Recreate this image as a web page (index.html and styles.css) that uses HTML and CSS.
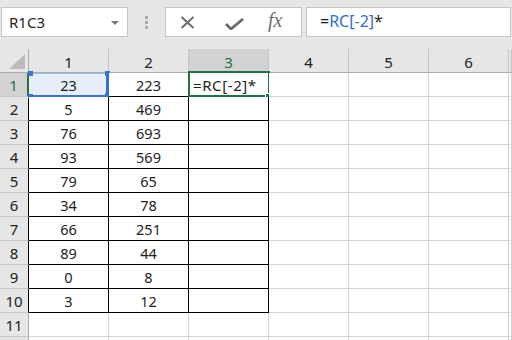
FILE: index.html
```html
<!DOCTYPE html>
<html lang="en">
<head>
    <meta charset="UTF-8">
    <title>Sheet</title>
    <link rel="stylesheet" href="styles.css">
</head>
<body>
<div class="toolbar">
    <div class="namebox">
        <span>R1C3</span>
        <svg class="drop" width="8" height="4" viewBox="0 0 8 4"><path d="M0 0h8L4 4z" fill="#777"/></svg>
    </div>
    <div class="grip"><i></i><i></i><i></i></div>
    <div class="fbuttons">
        <svg class="ico-x" width="15" height="13" viewBox="0 0 15 13"><path d="M1.5 1l12 11M13.5 1l-12 11" stroke="#6b6b6b" stroke-width="2" fill="none"/></svg>
        <svg class="ico-ok" width="19" height="12" viewBox="0 0 19 12"><path d="M1 6l5 5L18 1" stroke="#6b6b6b" stroke-width="2.8" fill="none"/></svg>
        <span class="fx">fx</span>
    </div>
    <div class="formula">=<span class="ref">RC[-2]</span>*</div>
</div>

<div class="sheet">
    <div class="corner"><svg width="16" height="15" viewBox="0 0 16 15"><path d="M16 0v15H0z" fill="#bcbcbc"/></svg></div>
    <div class="ch">1</div>
    <div class="ch">2</div>
    <div class="ch sel">3</div>
    <div class="ch">4</div>
    <div class="ch">5</div>
    <div class="ch">6</div>
    <div class="ch"></div>

    <div class="rh sel">1</div>
    <div class="c tb ref-cell">23<i class="h tl"></i><i class="h tr"></i><i class="h bl"></i><i class="h br"></i></div>
    <div class="c tb">223</div>
    <div class="c tb active left">=RC[-2]*</div>
    <div class="c"></div><div class="c"></div><div class="c"></div><div class="c"></div>

    <div class="rh tbl">2</div>
    <div class="c tb">5</div><div class="c tb">469</div><div class="c tb"></div>
    <div class="c"></div><div class="c"></div><div class="c"></div><div class="c"></div>

    <div class="rh tbl">3</div>
    <div class="c tb">76</div><div class="c tb">693</div><div class="c tb"></div>
    <div class="c"></div><div class="c"></div><div class="c"></div><div class="c"></div>

    <div class="rh tbl">4</div>
    <div class="c tb">93</div><div class="c tb">569</div><div class="c tb"></div>
    <div class="c"></div><div class="c"></div><div class="c"></div><div class="c"></div>

    <div class="rh tbl">5</div>
    <div class="c tb">79</div><div class="c tb">65</div><div class="c tb"></div>
    <div class="c"></div><div class="c"></div><div class="c"></div><div class="c"></div>

    <div class="rh tbl">6</div>
    <div class="c tb">34</div><div class="c tb">78</div><div class="c tb"></div>
    <div class="c"></div><div class="c"></div><div class="c"></div><div class="c"></div>

    <div class="rh tbl">7</div>
    <div class="c tb">66</div><div class="c tb">251</div><div class="c tb"></div>
    <div class="c"></div><div class="c"></div><div class="c"></div><div class="c"></div>

    <div class="rh tbl">8</div>
    <div class="c tb">89</div><div class="c tb">44</div><div class="c tb"></div>
    <div class="c"></div><div class="c"></div><div class="c"></div><div class="c"></div>

    <div class="rh tbl">9</div>
    <div class="c tb">0</div><div class="c tb">8</div><div class="c tb"></div>
    <div class="c"></div><div class="c"></div><div class="c"></div><div class="c"></div>

    <div class="rh tbl">10</div>
    <div class="c tb">3</div><div class="c tb">12</div><div class="c tb"></div>
    <div class="c"></div><div class="c"></div><div class="c"></div><div class="c"></div>

    <div class="rh">11</div>
    <div class="c"></div><div class="c"></div><div class="c"></div>
    <div class="c"></div><div class="c"></div><div class="c"></div><div class="c"></div>

    <div class="rh"></div>
    <div class="c"></div><div class="c"></div><div class="c"></div>
    <div class="c"></div><div class="c"></div><div class="c"></div><div class="c"></div>
</div>
</body>
</html>
```

FILE: styles.css
```css
body {
    margin: 0;
    width: 512px;
    height: 340px;
    overflow: hidden;
    background-color: #e6e6e6;
    font-family: "Noto Sans", sans-serif;
    color: #1e1e1e;
}

.toolbar {
    height: 49px;
    box-sizing: border-box;
    padding-top: 7px;
    display: flex;
    align-items: flex-start;
}

.namebox {
    margin-left: 1px;
    width: 127px;
    height: 30px;
    box-sizing: border-box;
    background-color: #fff;
    border: 1px solid #c6c6c6;
    display: flex;
    align-items: center;
    justify-content: space-between;
    padding: 0 8px 0 7px;
    font-size: 15px;
    color: #262626;
}

.drop {
    margin-top: 1px;
}

.grip {
    width: 37px;
    height: 30px;
    display: flex;
    flex-direction: column;
    align-items: center;
    justify-content: center;
    gap: 2px;
}

.grip i {
    width: 3px;
    height: 3px;
    background-color: #ababab;
}

.fbuttons {
    width: 137px;
    height: 30px;
    box-sizing: border-box;
    background-color: #fff;
    border: 1px solid #c6c6c6;
    display: flex;
    align-items: center;
    padding-left: 14px;
}

.ico-x {
    margin-top: 1px;
}

.ico-ok {
    margin-left: 30px;
    margin-top: 4px;
}

.fx {
    margin-left: 24px;
    font-family: "Liberation Serif", serif;
    font-style: italic;
    font-size: 20px;
    color: #6e6e6e;
    margin-top: -3px;
}

.formula {
    margin-left: 4px;
    width: 205px;
    height: 30px;
    box-sizing: border-box;
    background-color: #fff;
    border: 1px solid #c6c6c6;
    padding-left: 13px;
    font-size: 16px;
    line-height: 27px;
    color: #1e1e1e;
}

.formula .ref {
    color: #2f6fcf;
}

.sheet {
    display: grid;
    grid-template-columns: 29px repeat(6, 80px) 3px;
    grid-template-rows: repeat(12, 24px) 4px;
    font-size: 14.5px;
}

.corner {
    box-sizing: border-box;
    border-right: 1px solid #ababab;
    border-bottom: 1px solid #ababab;
    display: flex;
    align-items: flex-end;
    justify-content: flex-end;
    padding: 0 3px 3px 0;
}

.ch {
    box-sizing: border-box;
    border-right: 1px solid #c4c4c4;
    border-bottom: 1px solid #ababab;
    display: flex;
    align-items: center;
    justify-content: center;
    padding-top: 3px;
    font-size: 15px;
    color: #222;
}

.rh {
    box-sizing: border-box;
    border-right: 1px solid #ababab;
    border-bottom: 1px solid #c8c8c8;
    display: flex;
    align-items: center;
    justify-content: center;
    font-size: 15px;
    color: #222;
}

.rh.tbl {
    border-right-color: #000;
}

.ch.sel {
    background-color: #d2d2d2;
    color: #217346;
    border-bottom: 2px solid #217346;
}

.rh.sel {
    background-color: #d2d2d2;
    color: #217346;
    border-right: 2px solid #217346;
}

.c {
    position: relative;
    box-sizing: border-box;
    background-color: #fff;
    border-right: 1px solid #d4d4d4;
    border-bottom: 1px solid #d4d4d4;
    display: flex;
    align-items: center;
    justify-content: center;
}

.c.tb {
    border-right-color: #000;
    border-bottom-color: #000;
}

.c.left {
    justify-content: flex-start;
    padding-left: 4px;
    letter-spacing: 0.6px;
    font-size: 15px;
}

/* range finder box around the referenced cell */
.ref-cell {
    background-color: #e8eef9;
    box-shadow: inset 0 1px 0 #9dbbe8;
}

.ref-cell::after {
    content: "";
    position: absolute;
    left: 0;
    right: -1px;
    bottom: -2px;
    height: 3px;
    background-color: #3a73cc;
}

.ref-cell::before {
    content: "";
    position: absolute;
    top: 0;
    bottom: -1px;
    right: -1px;
    width: 3px;
    background-color: #3a73cc;
}

.h {
    position: absolute;
    width: 5px;
    height: 5px;
    background-color: #3a73cc;
}

.h.tl { left: -1px; top: -2px; }
.h.tr { right: -2px; top: -2px; }
.h.bl { left: -1px; bottom: -3px; }
.h.br { right: -3px; bottom: -3px; width: 6px; height: 6px; }

/* active cell outline with fill handle */
.active::before {
    content: "";
    position: absolute;
    left: -1px;
    top: -2px;
    width: 82px;
    height: 26px;
    box-sizing: border-box;
    border: 2px solid #217346;
}

.active::after {
    content: "";
    position: absolute;
    right: -4px;
    bottom: -4px;
    width: 5px;
    height: 5px;
    background-color: #217346;
    border: 1px solid #fff;
}
```
